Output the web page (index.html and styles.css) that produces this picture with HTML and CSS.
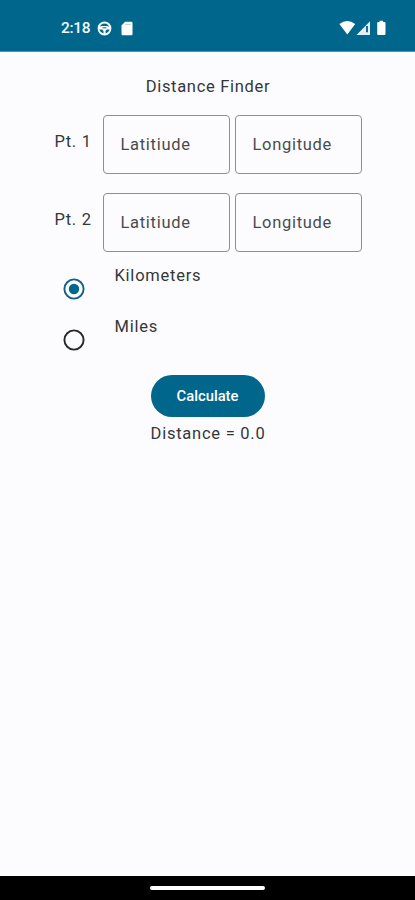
FILE: index.html
```html
<!DOCTYPE html>
<html lang="en">
<head>
<meta charset="utf-8">
<title>Distance Finder</title>
<link rel="stylesheet" href="styles.css">
</head>
<body>
<header class="status">
  <span class="clock">2:18</span>
  <svg class="wheel" width="15" height="15" viewBox="0 0 15 15"><circle cx="7.5" cy="7.5" r="6" fill="none" stroke="#fff" stroke-width="1.8"/><path d="M2 5.8 5.2 5h4.6l3.2.8v2.7H9.8L8.5 10v3h-2v-3L5.2 8.500H2z" fill="#fff"/><path d="M5.500 6.800h4" stroke="#00668b" stroke-width="1"/></svg>
  <svg class="card" width="12" height="15" viewBox="0 0 12 15"><path d="M4 .8h6.500Q11.500.8 11.500 2v11q0 1.200-1 1.200h-9q-1 0-1-1.200V4.500z" fill="#fff"/><path d="M4.500 3.500h5" stroke="#a3b8c2" stroke-width="1.200" stroke-dasharray="1.200 .7"/></svg>
  <svg class="signals" width="48" height="16" viewBox="0 0 48 16"><path d="M.4 4Q8.200 -2 16.200 4L8.300 14.500z" fill="#fff"/><path d="M31 1.200V15H17.500z" fill="#e4eef3"/><path d="M27 6h2v6.300h-2z" fill="#24659a"/><path d="M40.600.8h3.500v1.100h1.200q1.200 0 1.200 1.200v10.700q0 1.200-1.200 1.200h-5.900q-1.200 0-1.200-1.200V3.100q0-1.200 1.200-1.200h1.200z" fill="#fff"/></svg>
</header>
<main>
  <h1>Distance Finder</h1>
  <div class="point"><span class="label">Pt. 1</span><div class="field">Latitiude</div><div class="field">Longitude</div></div>
  <div class="point"><span class="label">Pt. 2</span><div class="field">Latitiude</div><div class="field">Longitude</div></div>
  <div class="choice"><svg class="radio" width="22" height="22" viewBox="0 0 22 22"><circle cx="11" cy="11" r="9.600" fill="none" stroke="#14608b" stroke-width="1.900"/><circle cx="11" cy="11" r="5.200" fill="#00668b"/></svg><span>Kilometers</span></div>
  <div class="choice"><svg class="radio" width="22" height="22" viewBox="0 0 22 22"><circle cx="11" cy="11" r="9.600" fill="none" stroke="#25282b" stroke-width="1.900"/></svg><span>Miles</span></div>
  <button type="button">Calculate</button>
  <p>Distance = 0.0</p>
</main>
<footer><div class="handle"></div></footer>
</body>
</html>
```
FILE: styles.css
```css
* { box-sizing: border-box; }
body {
  margin: 0;
  height: 900px;
  display: flex;
  flex-direction: column;
  background: #fcfcff;
  color: #34373a;
  font: 16.500px/24px Roboto, sans-serif;
  letter-spacing: 0.7px;
}
.status {
  height: 52px;
  padding: 5px 28px 0 61px;
  display: flex;
  align-items: center;
  background: #00668b;
  border-bottom: 1px solid #5794ad;
}
.clock { width: 36px; color: #f3f8fa; font-size: 15.500px; font-weight: 500; letter-spacing: -0.300px; }
.card { margin-left: 9px; }
.signals { margin-left: auto; }
main {
  flex: 1;
  display: flex;
  flex-direction: column;
  align-items: center;
}
h1 { margin: 23px 0 16px; padding-left: 1px; font-size: inherit; font-weight: 400; line-height: 24px; }
.point { width: 308px; height: 59px; margin: 0 0 19px 2px; display: flex; }
.label { width: 48px; padding-top: 15px; }
.field {
  width: 127px;
  margin-right: 5px;
  padding: 17px 0 0 17px;
  border: 1px solid #8c9093;
  border-radius: 4px;
  color: #484b4e;
}
.field:last-child { margin-right: 0; }
.choice { width: 308px; height: 51px; display: flex; letter-spacing: 0.750px; }
.point + .choice { margin-top: -7px; }
.radio { margin: 14px 30px 0 9px; }
button {
  width: 114px;
  height: 42px;
  margin: 9px 0 5px;
  padding: 0;
  border: 0;
  border-radius: 21px;
  background: #00668b;
  color: #fff;
  font: 500 14.800px Roboto, sans-serif;
}
p { margin: 0; padding-left: 1px; letter-spacing: 0.750px; }
footer {
  height: 24px;
  display: flex;
  justify-content: center;
  align-items: center;
  background: #000;
}
.handle { width: 115px; height: 4px; border-radius: 2px; background: #fff; }
```
